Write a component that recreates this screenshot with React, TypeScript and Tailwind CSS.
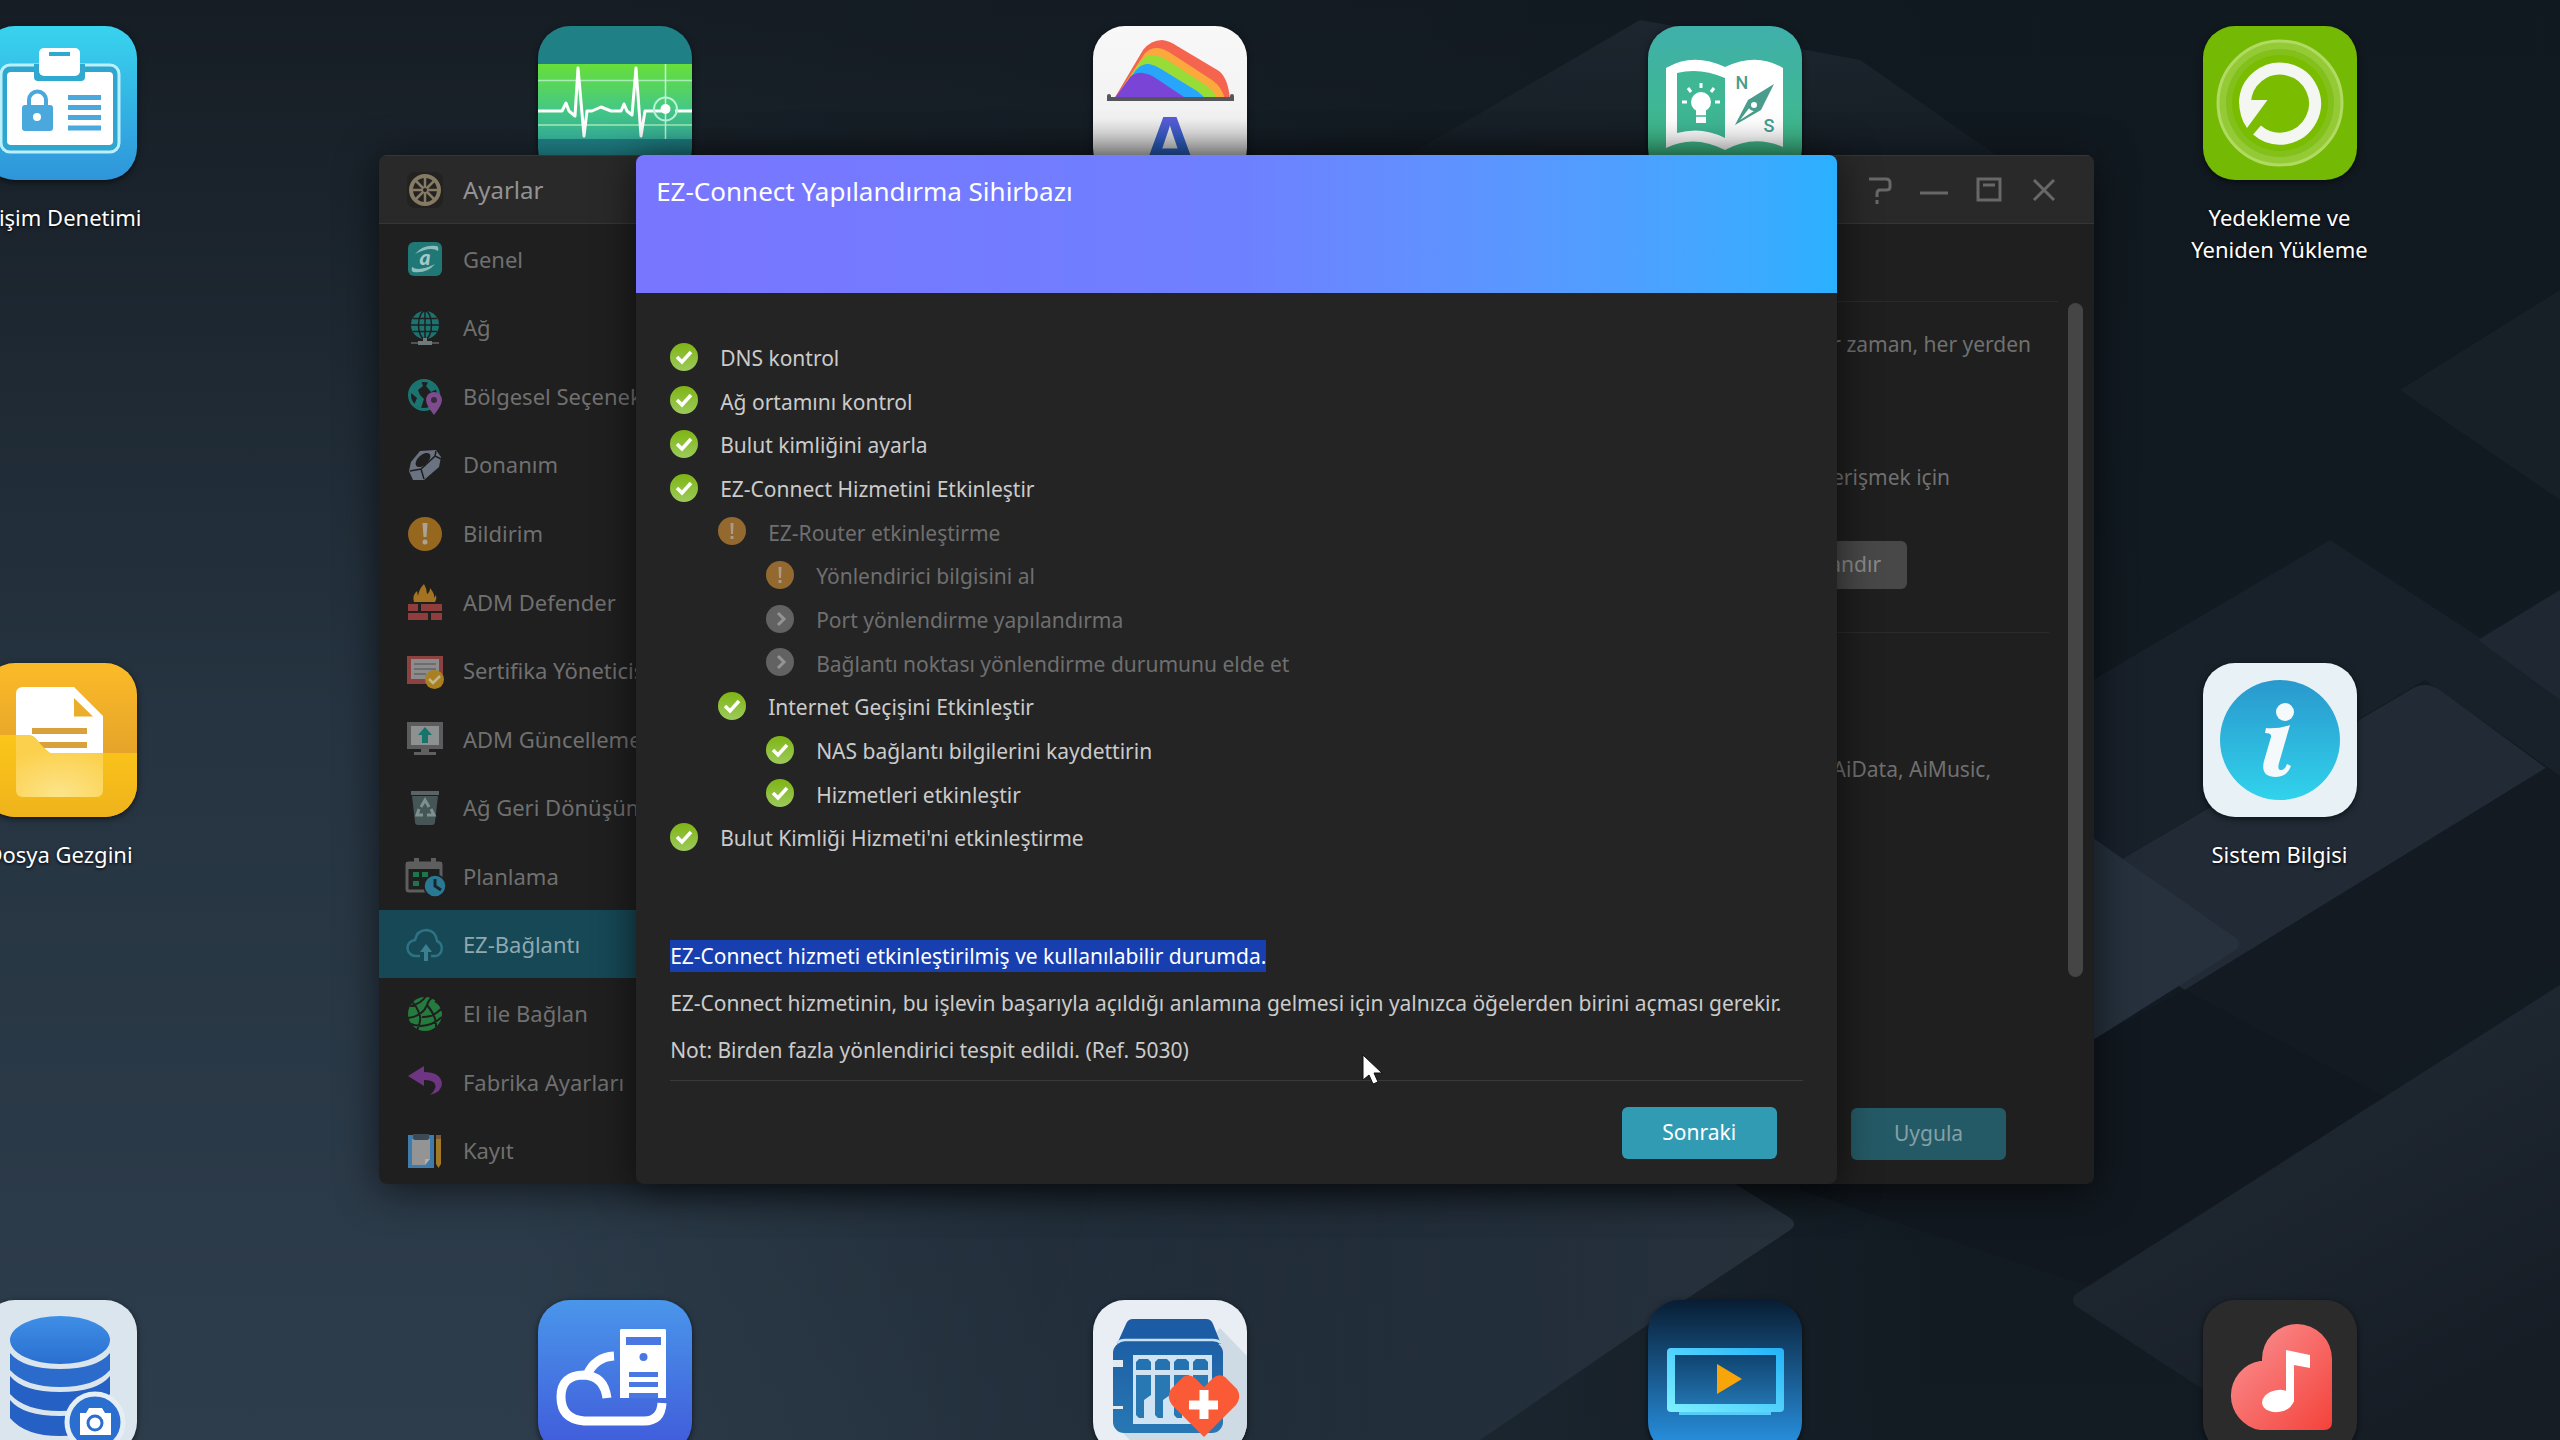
import type { ReactNode } from "react"

type StepState = "done" | "warn" | "skip"

interface Step {
  label: string
  level: 0 | 1 | 2
  state: StepState
}

interface AppShortcut {
  label: string
  place: string
  icon: ReactNode
}

const steps: Step[] = [
  { label: "DNS kontrol", level: 0, state: "done" },
  { label: "Ağ ortamını kontrol", level: 0, state: "done" },
  { label: "Bulut kimliğini ayarla", level: 0, state: "done" },
  { label: "EZ-Connect Hizmetini Etkinleştir", level: 0, state: "done" },
  { label: "EZ-Router etkinleştirme", level: 1, state: "warn" },
  { label: "Yönlendirici bilgisini al", level: 2, state: "warn" },
  { label: "Port yönlendirme yapılandırma", level: 2, state: "skip" },
  { label: "Bağlantı noktası yönlendirme durumunu elde et", level: 2, state: "skip" },
  { label: "Internet Geçişini Etkinleştir", level: 1, state: "done" },
  { label: "NAS bağlantı bilgilerini kaydettirin", level: 2, state: "done" },
  { label: "Hizmetleri etkinleştir", level: 2, state: "done" },
  { label: "Bulut Kimliği Hizmeti'ni etkinleştirme", level: 0, state: "done" },
]

const indent = { 0: "", 1: "pl-12", 2: "pl-24" }

/* ---------- desktop icons, 154 x 154 ---------- */

function AccessIcon() {
  return (
    <svg viewBox="0 0 154 154" className="h-full w-full">
      <defs>
        <linearGradient id="access" x1="0" y1="0" x2="0" y2="1">
          <stop offset="0" stopColor="#38d3ee" />
          <stop offset="1" stopColor="#2f95d9" />
        </linearGradient>
      </defs>
      <rect width="154" height="154" fill="url(#access)" />
      <rect x="18" y="39" width="118" height="87" rx="9" fill="#2fa6cf" stroke="#b9f0fb" strokeWidth="3" />
      <rect x="24" y="46" width="106" height="73" rx="4" fill="#fff" />
      <path d="M51 38h51v13q0 4-4 4H55q-4 0-4-4z" fill="#2fa9cf" />
      <rect x="56" y="22" width="41" height="28" rx="5" fill="#fff" />
      <rect x="66" y="26" width="21" height="4" fill="#2fa9cf" />
      <path d="M46 80v-6a8 8 0 0 1 17 0v6" fill="none" stroke="#4aa8dc" strokeWidth="4" />
      <rect x="39" y="79" width="31" height="26" rx="3" fill="#4aa8dc" />
      <ellipse cx="54" cy="91" rx="4" ry="4" fill="#fff" />
      <path d="M85 71.500h33M85 81.500h33M85 91.500h33M85 102h33" stroke="#4aa8dc" strokeWidth="5" />
    </svg>
  )
}

function ActivityIcon() {
  return (
    <svg viewBox="0 0 154 154" className="h-full w-full">
      <defs>
        <linearGradient id="band" x1="0" y1="0" x2="0" y2="1">
          <stop offset="0" stopColor="#67df3a" />
          <stop offset="0.600" stopColor="#45c884" />
          <stop offset="1" stopColor="#38b39c" />
        </linearGradient>
      </defs>
      <rect width="154" height="154" fill="#1f8086" />
      <rect y="38" width="154" height="75" fill="url(#band)" />
      <path d="M0 54.500h154M0 99h154" stroke="#a4eeb5" strokeWidth="1.500" />
      <path
        d="M0 85h24l4-8 3 8 6 5 3-48 6 68 3-25h5l9-4 10 4h10l3-7 3 7 5 4 4-47 5 68 4-25h16l6-2M137 85h17"
        fill="none"
        stroke="#fff"
        strokeWidth="3"
        strokeLinejoin="round"
      />
      <path d="M127.500 38v75" stroke="#c7f5d5" strokeWidth="1.500" />
      <circle cx="127.500" cy="83" r="11.500" fill="none" stroke="#b9f3d8" strokeWidth="2" />
      <circle cx="127.500" cy="83" r="5" fill="#fff" />
    </svg>
  )
}

function RainbowIcon() {
  return (
    <svg viewBox="0 0 154 154" className="h-full w-full">
      <defs>
        <linearGradient id="letter" x1="0" y1="0" x2="0" y2="1">
          <stop offset="0" stopColor="#7a5aea" />
          <stop offset="0.500" stopColor="#2d5fc0" />
          <stop offset="1" stopColor="#1f5aa8" />
        </linearGradient>
        <linearGradient id="paper" x1="0" y1="0" x2="0" y2="1">
          <stop offset="0" stopColor="#f8f8f8" />
          <stop offset="0.600" stopColor="#f2f2f2" />
          <stop offset="1" stopColor="#b9b9b9" />
        </linearGradient>
      </defs>
      <rect width="154" height="154" fill="url(#paper)" />
      <path d="M21 73L50 24Q58 14 69 14Q77 15 84 20L126 45Q135 52 137 73z" fill="#f4644f" />
      <path d="M22 73L50 30Q56 21 65 22Q72 23 79 28L119 54Q129 61 132 73z" fill="#fba93c" />
      <path d="M22 73L47 36Q53 28 61 29Q67 30 74 34L114 60Q122 66 124 73z" fill="#98dc38" />
      <path d="M22 73L43 44Q49 37 56 38Q62 39 68 43L104 65Q110 70 113 73z" fill="#28a6fb" />
      <path d="M21 73L38 50Q44 46 50 47Q56 48 61 51L94 73z" fill="#7a45d6" />
      <path d="M16 70v3h123v-3" fill="none" stroke="#55555c" strokeWidth="4" strokeLinecap="round" />
      <text x="77" y="145" textAnchor="middle" fontFamily="Liberation Sans, sans-serif" fontWeight="700" fontSize="78" fill="url(#letter)">
        A
      </text>
    </svg>
  )
}

function GuideIcon() {
  return (
    <svg viewBox="0 0 154 154" className="h-full w-full">
      <defs>
        <linearGradient id="guide" x1="0" y1="0" x2="0" y2="1">
          <stop offset="0" stopColor="#3fb0ab" />
          <stop offset="1" stopColor="#3fbd80" />
        </linearGradient>
      </defs>
      <rect width="154" height="154" fill="url(#guide)" />
      <path d="M18 42Q45 26 77 41Q109 26 135 42V121Q106 108 77 124Q46 108 18 122z" fill="#fff" />
      <path d="M29 47Q52 41 77 52V112Q54 100 29 107z" fill="#3fb795" />
      <circle cx="53" cy="76" r="10" fill="#fff" />
      <path d="M48 82h10v15h-10z" fill="#fff" />
      <path d="M53 57v5M40 62l3 4M66 62l-3 4M34 76h5M67 76h5" stroke="#fff" strokeWidth="3" />
      <path d="M48 90h10" stroke="#3fb795" strokeWidth="1.500" />
      <path d="M126 58L113 84L87 99L100 74z" fill="#4a9d8c" />
      <path d="M92 94l10-13 4 4z" fill="#fff" />
      <circle cx="106" cy="79" r="4.500" fill="#fff" stroke="#4a9d8c" strokeWidth="3" />
      <g fontFamily="Roboto, sans-serif" fontSize="18" fontWeight="500" fill="#4a9d8c" textAnchor="middle">
        <text x="94" y="63">N</text>
        <text x="121" y="106">S</text>
      </g>
    </svg>
  )
}

function BackupIcon() {
  return (
    <svg viewBox="0 0 154 154" className="h-full w-full">
      <rect width="154" height="154" fill="#74b903" />
      <circle cx="77" cy="77" r="62" fill="#94ca35" stroke="#b0da62" strokeWidth="3" />
      <circle cx="77" cy="77" r="54" fill="#83c01c" />
      <circle cx="77" cy="77" r="48" fill="#79bc00" />
      <path d="M54 104A35 35 0 1 0 42 78" fill="none" stroke="#f4f6f2" strokeWidth="12" />
      <path d="M36 74h28.500L44 102Q36 91 36 74z" fill="#f4f6f2" />
    </svg>
  )
}

function FilesIcon() {
  return (
    <svg viewBox="0 0 154 154" className="h-full w-full">
      <defs>
        <linearGradient id="folderBack" x1="0" y1="0" x2="0" y2="1">
          <stop offset="0" stopColor="#fbbb28" />
          <stop offset="0.600" stopColor="#e5a32a" />
        </linearGradient>
        <linearGradient id="folderFront" x1="0" y1="0" x2="0" y2="1">
          <stop offset="0" stopColor="#fcc619" />
          <stop offset="1" stopColor="#efb31c" />
        </linearGradient>
        <radialGradient id="glow" cx="0.500" cy="1" r="0.800">
          <stop offset="0" stopColor="#fde58c" />
          <stop offset="1" stopColor="#fbd04c" />
        </radialGradient>
      </defs>
      <rect width="154" height="154" fill="url(#folderBack)" />
      <path d="M33 31q0-7 7-7h51l29 29v45H33z" fill="#fff" />
      <path d="M91 35v18.500h19z" fill="#eaae2b" />
      <path d="M49 68h55M49 82h55" stroke="#d9a13b" strokeWidth="6" />
      <path d="M0 72h45q6 0 10 6t12 12h87v64H0z" fill="url(#folderFront)" />
      <path d="M33 72h12q6 0 10 6t12 12h53v37q0 7-7 7H40q-7 0-7-7z" fill="url(#glow)" />
    </svg>
  )
}

function InfoIcon() {
  return (
    <svg viewBox="0 0 154 154" className="h-full w-full">
      <defs>
        <linearGradient id="info" x1="0" y1="0" x2="0" y2="1">
          <stop offset="0" stopColor="#2998cd" />
          <stop offset="1" stopColor="#31d2ec" />
        </linearGradient>
      </defs>
      <rect width="154" height="154" fill="#e8f1f6" />
      <circle cx="77" cy="77" r="60" fill="url(#info)" />
      <circle cx="82" cy="49" r="9" fill="#f4fafc" />
      <path
        d="M63 65q12 1 24-3l-11 38q-2 7 2 7t6-6l4 2q-4 11-15 11q-16 0-12-16l7-24q1-4-6-4z"
        fill="#f4fafc"
      />
    </svg>
  )
}

function DatabaseIcon() {
  return (
    <svg viewBox="0 0 154 154" className="h-full w-full">
      <defs>
        <linearGradient id="db" x1="0" y1="0" x2="0" y2="1">
          <stop offset="0" stopColor="#3f8fe6" />
          <stop offset="1" stopColor="#2a6fd0" />
        </linearGradient>
      </defs>
      <rect width="154" height="154" fill="#dbe5ed" />
      <ellipse cx="77" cy="40" rx="50" ry="24" fill="url(#db)" />
      <path d="M27 53Q40 69 77 69T127 53V70Q112 87 77 87T27 70z" fill="#2a6bcc" />
      <path d="M27 76Q40 92 77 92T127 76V94Q112 111 77 111T27 94z" fill="#2560c4" />
      <path d="M27 100Q40 116 77 116T127 100V118Q112 136 77 136T27 118z" fill="#2560c4" />
      <circle cx="112" cy="122" r="28" fill="#2a6fd0" stroke="#e6eef5" strokeWidth="5" />
      <path d="M97 113h6l3-5h13l3 5h6v22H97z" fill="#fff" />
      <circle cx="112" cy="123" r="7" fill="#fff" stroke="#2a6fd0" strokeWidth="3" />
    </svg>
  )
}

function CloudServerIcon() {
  return (
    <svg viewBox="0 0 154 154" className="h-full w-full">
      <defs>
        <linearGradient id="cloudServer" x1="0" y1="0" x2="0" y2="1">
          <stop offset="0" stopColor="#4a96ea" />
          <stop offset="1" stopColor="#4059da" />
        </linearGradient>
      </defs>
      <rect width="154" height="154" fill="url(#cloudServer)" />
      <path d="M83 29h44l1 1v68H82V30z" fill="#fff" />
      <path d="M88 37h35v8H88zM91 72h29v5H91zM91 82h29v5H91zM91 93h29v5H91z" fill="#4978e2" />
      <circle cx="105.500" cy="57" r="4" fill="#4978e2" />
      <g fill="none" stroke="#fff" strokeWidth="9">
        <path d="M124 103Q123 121 106 121H46Q23 119 23 97T46 75Q66 76 69 98" />
        <path d="M49 75Q57 57 76 56" />
      </g>
    </svg>
  )
}

function NasHealthIcon() {
  return (
    <svg viewBox="0 0 154 154" className="h-full w-full">
      <defs>
        <linearGradient id="nas" x1="0" y1="0" x2="0" y2="1">
          <stop offset="0" stopColor="#1d5fa5" />
          <stop offset="1" stopColor="#2878b4" />
        </linearGradient>
      </defs>
      <rect width="154" height="154" fill="#e9eef4" />
      <path d="M127 28L154 56V154H50L30 133z" fill="#cfdbe4" />
      <path d="M33 24q2-5 7-5h73q5 0 7 5l8 20H24z" fill="#1c5ca4" />
      <rect x="20" y="42" width="110" height="91" rx="11" fill="url(#nas)" />
      <path d="M24 43q3-3 8-3h88q5 0 8 3" fill="none" stroke="#c8e0f2" strokeWidth="2.500" />
      <path d="M20 60h10v7H20zM20 106h10v3H20z" fill="#dfeaf3" />
      <rect x="40" y="55" width="79" height="69" fill="#cfe3f2" />
      <path
        d="M43 70V62l3-3h9l3 3v8zM62 70V62l3-3h9l3 3v8zM81 70V62l3-3h9l3 3v8zM100 70V62l3-3h9l3 3v8z"
        fill="#2473b0"
      />
      <path
        d="M43 75h15v20l-7 5v18h-5l-3-3zM62 75h15v20l-7 5v18h-5l-3-3zM81 75h15v20l-7 5v18h-5l-3-3zM100 75h15v43h-15z"
        fill="#2878b4"
      />
      <path d="M111 137L79 105Q73 97 78 89L90 77Q96 73 102 78L111 87L120 78Q126 73 132 77L144 89Q149 97 143 105z" fill="#fb5a36" />
      <path d="M111 90v29M96 105h29" stroke="#fff" strokeWidth="9" />
    </svg>
  )
}

function VideoIcon() {
  return (
    <svg viewBox="0 0 154 154" className="h-full w-full">
      <defs>
        <linearGradient id="videoBg" x1="0" y1="0" x2="0" y2="1">
          <stop offset="0" stopColor="#081d33" />
          <stop offset="1" stopColor="#2a97ea" />
        </linearGradient>
        <linearGradient id="tv" x1="0" y1="1" x2="1" y2="0">
          <stop offset="0" stopColor="#7ff0ff" />
          <stop offset="1" stopColor="#23b3f8" />
        </linearGradient>
        <linearGradient id="screen" x1="0" y1="0" x2="0" y2="1">
          <stop offset="0" stopColor="#0f4470" />
          <stop offset="1" stopColor="#2273ae" />
        </linearGradient>
      </defs>
      <rect width="154" height="154" fill="url(#videoBg)" />
      <path d="M31 110h92v5H31z" fill="#56cdf8" />
      <rect x="19" y="48" width="117" height="64" rx="4" fill="url(#tv)" />
      <rect x="27" y="55" width="101" height="49" fill="url(#screen)" />
      <path d="M69 64v30l25-15z" fill="#f7a508" />
    </svg>
  )
}

function MusicIcon() {
  return (
    <svg viewBox="0 0 154 154" className="h-full w-full">
      <defs>
        <linearGradient id="music" x1="0" y1="0" x2="1" y2="1">
          <stop offset="0.200" stopColor="#f98484" />
          <stop offset="1" stopColor="#f4423a" />
        </linearGradient>
      </defs>
      <rect width="154" height="154" fill="#2b2b2b" />
      <path d="M59 61V59A35 35 0 0 1 129 59V122Q129 130 121 130H57A35 35 0 0 1 57 61z" fill="url(#music)" />
      <path d="M83 50l24 5v13l-16-3v37h-8z" fill="#fff" />
      <ellipse cx="75" cy="101" rx="16" ry="11" fill="#fff" transform="rotate(-10 75 101)" />
    </svg>
  )
}

const shortcuts: AppShortcut[] = [
  { label: "Erişim Denetimi", place: "col-start-1 row-start-1", icon: <AccessIcon /> },
  { label: "", place: "col-start-2 row-start-1", icon: <ActivityIcon /> },
  { label: "", place: "col-start-3 row-start-1", icon: <RainbowIcon /> },
  { label: "", place: "col-start-4 row-start-1", icon: <GuideIcon /> },
  { label: "Yedekleme ve Yeniden Yükleme", place: "col-start-5 row-start-1", icon: <BackupIcon /> },
  { label: "Dosya Gezgini", place: "col-start-1 row-start-2", icon: <FilesIcon /> },
  { label: "Sistem Bilgisi", place: "col-start-5 row-start-2", icon: <InfoIcon /> },
  { label: "", place: "col-start-1 row-start-3", icon: <DatabaseIcon /> },
  { label: "", place: "col-start-2 row-start-3", icon: <CloudServerIcon /> },
  { label: "", place: "col-start-3 row-start-3", icon: <NasHealthIcon /> },
  { label: "", place: "col-start-4 row-start-3", icon: <VideoIcon /> },
  { label: "", place: "col-start-5 row-start-3", icon: <MusicIcon /> },
]

/* ---------- sidebar icons, 36 x 36 ---------- */

const sections: { label: string; icon: ReactNode }[] = [
  {
    label: "Genel",
    icon: (
      <>
        <rect x="1" y="1" width="34" height="34" rx="6" fill="#1f7776" />
        <path d="M8 13Q16 3 30 5Q32 6 31 10Q24 5 8 13zM28 23Q20 33 6 31Q4 30 5 26Q12 31 28 23z" fill="#8fbcbb" />
        <text x="18" y="24" textAnchor="middle" fontFamily="Lato, sans-serif" fontWeight="900" fontStyle="italic" fontSize="21" fill="#a5c8c8">
          a
        </text>
      </>
    ),
  },
  {
    label: "Ağ",
    icon: (
      <>
        <circle cx="18" cy="15" r="14" fill="#1c7471" />
        <g fill="none" stroke="#1f1f1f" strokeWidth="1.500">
          <ellipse cx="18" cy="15" rx="6.500" ry="14" />
          <path d="M18 1v28M4 15h28M6 8.500h24M6 21.500h24" />
        </g>
        <path d="M4 33h28" stroke="#666" strokeWidth="1.500" />
        <path d="M16 28h4v3h5v4H11v-4h5z" fill="#707a7a" />
      </>
    ),
  },
  {
    label: "Bölgesel Seçenekler",
    icon: (
      <>
        <circle cx="17" cy="17" r="14.500" fill="none" stroke="#1c7471" strokeWidth="3" />
        <path d="M4 10L14 3l2 5-5 4 2 5 4 4-3 9L7 27l3-7-6-5zM22 3l8 8-6 3-5-6z" fill="#1c7471" />
        <path d="M27 14a8 8 0 0 1 8 8q0 5-8 15-8-10-8-15a8 8 0 0 1 8-8z" fill="#7d4c8c" />
        <circle cx="27" cy="22" r="3" fill="#3a2a40" />
      </>
    ),
  },
  {
    label: "Donanım",
    icon: (
      <>
        <path d="M13 4L29 3L34 10L32 20L17 33L6 33L2 24L4 15z" fill="#6b7380" />
        <ellipse cx="16" cy="13" rx="9" ry="5" transform="rotate(-42 16 13)" fill="#1f1f1f" />
        <path d="M3 24l11-2L28 9l1-5M14 22l3 10M28 9l6 3" fill="none" stroke="#1f1f1f" strokeWidth="1.500" />
      </>
    ),
  },
  {
    label: "Bildirim",
    icon: (
      <>
        <circle cx="18" cy="18" r="17" fill="#96681f" />
        <path d="M15.500 7h5l-1 14h-3z" fill="#a9a39a" />
        <circle cx="18" cy="26" r="2.500" fill="#a9a39a" />
      </>
    ),
  },
  {
    label: "ADM Defender",
    icon: (
      <>
        <path d="M7 18Q5 11 10 7l1 5Q12 5 17 0q3 5 3 10 3-2 3-6 5 6 4 10l2-3q1 4-1 7z" fill="#a37321" />
        <path d="M1 20h10v7H1zM14 20h21v7H14zM1 29h20v7H1zM24 29h11v7H24z" fill="#8f3d3d" />
      </>
    ),
  },
  {
    label: "Sertifika Yöneticisi",
    icon: (
      <>
        <rect x="0" y="3" width="36" height="28" fill="#8d4242" />
        <rect x="4" y="6" width="28" height="20" fill="#8c8c8c" />
        <path d="M7 11h22M7 16h22M7 21h12" stroke="#6d6d6d" strokeWidth="2" />
        <circle cx="27.500" cy="26.500" r="9.500" fill="#a8801f" />
        <path d="M22 26l4 4 7-7" fill="none" stroke="#c5b48d" strokeWidth="2.500" />
      </>
    ),
  },
  {
    label: "ADM Güncelleme",
    icon: (
      <>
        <rect x="0" y="1" width="36" height="27" fill="#5c5c5c" />
        <rect x="4" y="5" width="28" height="19" fill="#8e9191" />
        <path d="M18 6l7 8h-4v8h-6v-8h-4z" fill="#17746a" />
        <path d="M14 28h8v3h7v3H7v-3h7z" fill="#606060" />
      </>
    ),
  },
  {
    label: "Ağ Geri Dönüşüm Kutusu",
    icon: (
      <>
        <path d="M4 1h28v4H4z" fill="#5a6466" />
        <path d="M5 6h26l-3 26q0 3-3 3H11q-3 0-3-3z" fill="#465555" />
        <path d="M14 17l4-7 4 7M12 19l-2 6h6M24 19l3 6h-7" fill="none" stroke="#7d9190" strokeWidth="3" />
      </>
    ),
  },
  {
    label: "Planlama",
    icon: (
      <>
        <rect x="0" y="5" width="34" height="28" rx="2" fill="none" stroke="#5e5e5e" strokeWidth="3" />
        <path d="M-1 4h36v7H-1zM7 0h5v6H7zM24 0h5v6h-5z" fill="#5e5e5e" />
        <path d="M6 14h6v5H6zM15 14h6v5h-6zM6 23h6v5H6z" fill="#20744b" />
        <circle cx="28" cy="28" r="11" fill="#2a7894" stroke="#1f1f1f" strokeWidth="1.500" />
        <path d="M28 21v7l6 4" fill="none" stroke="#16262d" strokeWidth="3" />
      </>
    ),
  },
  {
    label: "EZ-Bağlantı",
    icon: (
      <>
        <path d="M13 29H9A8 8 0 0 1 8 13Q10 3 20 3Q29 4 30 14A8 8 0 0 1 29 29H24" fill="none" stroke="#2d7383" strokeWidth="2.500" />
        <path d="M19 17l6 8h-4v9h-4v-9h-4z" fill="#3c7f8e" />
      </>
    ),
  },
  {
    label: "El ile Bağlan",
    icon: (
      <>
        <circle cx="18" cy="18" r="17" fill="#257a3e" />
        <path
          d="M3 10Q14 8 19 0M1 22Q16 20 20 9T30 4M10 34Q14 26 13 20Q10 10 5 6M15 21Q25 22 34 13M20 9q10 12 9 22M1 27q18 8 34-6M28 5q6 3 8 11"
          fill="none"
          stroke="#1f1f1f"
          strokeWidth="2"
        />
      </>
    ),
  },
  {
    label: "Fabrika Ayarları",
    icon: (
      <path d="M1 12L17 2V8Q33 8 35 19Q35 28 23 31Q30 25 28 20Q26 16 17 16V22z" fill="#6e3583" />
    ),
  },
  {
    label: "Kayıt",
    icon: (
      <>
        <rect x="1" y="2" width="26" height="33" fill="#3f7cab" />
        <path d="M5 6h18v20l-5 6H5z" fill="#949494" />
        <path d="M6 1h16v4q0 2-2 2H8q-2 0-2-2z" fill="#3c4a55" />
        <path d="M18 32v-6h5z" fill="#b0b0b0" />
        <path d="M29 4h5v27l-2.500 4-2.500-4z" fill="#a27a25" />
        <path d="M29 2h5v4h-5z" fill="#775c3b" />
      </>
    ),
  },
]

function Wallpaper() {
  return (
    <svg
      viewBox="0 0 2560 1440"
      preserveAspectRatio="xMidYMid slice"
      aria-hidden="true"
      className="absolute inset-0 h-full w-full"
    >
      <defs>
        <linearGradient id="sky" x1="0" y1="0" x2="0" y2="1">
          <stop offset="0" stopColor="#161d24" />
          <stop offset="0.500" stopColor="#263441" />
          <stop offset="1" stopColor="#2e3d4c" />
        </linearGradient>
        <linearGradient id="shade" x1="0" y1="0" x2="1" y2="0">
          <stop offset="0.200" stopColor="#111920" stopOpacity="0" />
          <stop offset="0.750" stopColor="#111920" stopOpacity="0.950" />
        </linearGradient>
        <linearGradient id="slab" x1="0" y1="0" x2="1" y2="0">
          <stop offset="0" stopColor="#263240" stopOpacity="0" />
          <stop offset="0.600" stopColor="#263240" stopOpacity="0.700" />
          <stop offset="1" stopColor="#26313c" />
        </linearGradient>
        <linearGradient id="slabFade" x1="0" y1="0" x2="0.600" y2="1">
          <stop offset="0" stopColor="#242d39" />
          <stop offset="1" stopColor="#161d25" />
        </linearGradient>
        <linearGradient id="ridge" x1="0" y1="0" x2="0" y2="1">
          <stop offset="0" stopColor="#1d252e" />
          <stop offset="1" stopColor="#1b232b" stopOpacity="0.200" />
        </linearGradient>
      </defs>
      <rect width="2560" height="1440" fill="url(#sky)" />
      <rect width="2560" height="1440" fill="url(#shade)" />
      <path d="M1400 160L1640 20L1860 60L2060 200z" fill="url(#ridge)" />
      <path d="M2093 680L2330 540L2560 690V776L2425 680L2093 876z" fill="#18202a" />
      <path d="M2400 390L2560 290V500z" fill="#171f27" />
      <path d="M2093 876L2410 690Q2425 680 2440 690L2546 768L2185 990L2093 930z" fill="#212a35" />
      <path d="M2478 640L2560 590V700z" fill="#1f2732" />
      <path d="M2093 838L2236 938Q2242 944 2236 950L2093 1040z" fill="#26313d" />
      <path d="M2185 990L2546 768L2560 776V960L2340 1110z" fill="#131a22" />
      <path d="M2093 1040L2185 990L2390 1100L2100 1290L1800 1190V1184H2093z" fill="#11181f" />
      <path d="M1100 1184H1735L1790 1218Q1798 1224 1790 1230L1640 1330L1480 1440H1000z" fill="url(#slab)" />
      <path d="M2560 985L2076 1294Q2070 1300 2076 1306L2280 1440H2560z" fill="url(#slabFade)" />
    </svg>
  )
}

function StepIcon({ state }: { state: StepState }) {
  return (
    <svg viewBox="0 0 28 28" className="mb-1 size-7 shrink-0">
      {state === "done" && (
        <>
          <defs>
            <linearGradient id="done" x1="0" y1="0" x2="0" y2="1">
              <stop offset="0" stopColor="#7fb414" />
              <stop offset="1" stopColor="#9ccb5c" />
            </linearGradient>
          </defs>
          <circle cx="14" cy="14" r="14" fill="url(#done)" />
          <path d="M7 14l5 5 9-10" fill="none" stroke="#fff" strokeWidth="3.500" />
        </>
      )}
      {state === "warn" && (
        <>
          <circle cx="14" cy="14" r="14" fill="#94692f" />
          <path d="M12.500 6h3l-.5 11h-2zM12.500 19h3v3h-3z" fill="#a99c8b" />
        </>
      )}
      {state === "skip" && (
        <>
          <circle cx="14" cy="14" r="14" fill="#626262" />
          <path d="M12 8l6 6-6 6" fill="none" stroke="#949494" strokeWidth="3" />
        </>
      )}
    </svg>
  )
}

function SettingsWindow() {
  return (
    <section aria-label="Ayarlar" className="flex h-full flex-col overflow-hidden rounded-lg bg-[#1f1f1f] text-[22px] text-[#707070]">
      <header className="flex h-[69px] shrink-0 items-center justify-between border-y border-[#363636] bg-[#292929] pr-9 pl-7">
        <div className="flex items-center gap-5">
          <svg viewBox="0 0 36 36" className="size-9">
            <rect width="36" height="36" rx="8" fill="#232221" />
            <circle cx="18" cy="18" r="14" fill="none" stroke="#857a63" strokeWidth="4" />
            <circle cx="18" cy="18" r="3" fill="#857a63" />
            <path d="M18 5v26M5 18h26M9 9l18 18M27 9L9 27" stroke="#857a63" strokeWidth="2.500" />
            <circle cx="18" cy="18" r="2" fill="#232221" />
          </svg>
          <h1 className="text-2xl text-[#929292]">Ayarlar</h1>
        </div>
        <div className="flex items-center gap-[27px]">
          <button aria-label="Yardım" className="size-7">
            <svg viewBox="0 0 28 28" fill="none" stroke="#686868" strokeWidth="3">
              <path d="M4 3h17q4 0 4 4v4q0 3-4 3h-6q-3 0-3 4v3M12 24v4" />
            </svg>
          </button>
          <button aria-label="Küçült" className="size-7">
            <svg viewBox="0 0 28 28" stroke="#686868" strokeWidth="3">
              <path d="M0 17h28" />
            </svg>
          </button>
          <button aria-label="Büyüt" className="size-7">
            <svg viewBox="0 0 28 28" fill="none" stroke="#686868" strokeWidth="3">
              <path d="M3 3h22v21H3zM8 9h12" />
            </svg>
          </button>
          <button aria-label="Kapat" className="size-7">
            <svg viewBox="0 0 28 28" fill="none" stroke="#686868" strokeWidth="3">
              <path d="M4 4l20 20M24 4L4 24" />
            </svg>
          </button>
        </div>
      </header>
      <div className="flex flex-1">
        <nav className="grid w-[257px] shrink-0 auto-rows-fr overflow-hidden">
          {sections.map((section) => {
            const active = section.label === "EZ-Bağlantı"
            return (
              <a
                key={section.label}
                href="#"
                className={`flex items-center gap-5 pt-0.5 pl-7 whitespace-nowrap ${active ? "bg-[#164856] text-[#8fa8af]" : ""}`}
              >
                <svg viewBox="0 0 36 36" className="size-9 shrink-0 overflow-visible">
                  {section.icon}
                </svg>
                {section.label}
              </a>
            )
          })}
        </nav>
        <div className="flex flex-1 flex-col pr-[11px] text-[21px]">
          <div className="flex flex-1 pt-[77px]">
            <div className="mr-[10px] flex flex-1 flex-col items-end border-t border-[#2b2b2b] pr-[27px]">
              <p className="mt-[26px] h-8 leading-8">her zaman, her yerden</p>
              <p className="mt-[101px] mr-[81px] h-8 leading-8">erişmek için</p>
              <button className="mt-12 mr-[124px] h-12 rounded-md bg-[#484848] px-[26px] text-[#8a8a8a]">Yapılandır</button>
              <hr className="-mr-[18px] mt-[43px] w-full border-[#2b2b2b]" />
              <p className="mt-[120px] mr-[40px] h-8 leading-8">AiData, AiMusic,</p>
            </div>
            <div className="mt-0.5 h-[674px] w-[15px] rounded-full bg-[#454545]" />
          </div>
          <div className="mr-[77px] mb-6 flex justify-end">
            <button className="h-[52px] w-[155px] rounded-md bg-[#245a66] text-[#84a0a6]">Uygula</button>
          </div>
        </div>
      </div>
    </section>
  )
}

function WizardDialog() {
  return (
    <div
      role="dialog"
      aria-labelledby="wizard-title"
      className="absolute inset-y-0 left-[15%] flex w-[70%] flex-col overflow-hidden rounded-lg bg-[#242424] text-[21px] text-[#cbcbcb] shadow-[0_4px_40px_rgba(0,0,0,0.6)]"
    >
      <header className="h-[138px] shrink-0 bg-linear-to-r from-[#7975ff] via-[#6e80ff] via-50% to-[#2ab0ff] px-5 pt-5">
        <h2 id="wizard-title" className="text-[26px] leading-8 text-white">
          EZ-Connect Yapılandırma Sihirbazı
        </h2>
      </header>
      <div className="flex flex-1 flex-col px-[34px] pt-11">
        <ul className="grid h-[524px] auto-rows-fr">
          {steps.map((step) => (
            <li
              key={step.label}
              className={`flex items-center gap-[22px] ${indent[step.level]} ${step.state === "done" ? "" : "text-[#6f6f6f]"}`}
            >
              <StepIcon state={step.state} />
              {step.label}
            </li>
          ))}
        </ul>
        <div className="mt-[72px] leading-[47px] whitespace-nowrap">
          <p>
            <mark className="inline-block bg-[#183fb0] leading-8 text-white">
              EZ-Connect hizmeti etkinleştirilmiş ve kullanılabilir durumda.
            </mark>
          </p>
          <p>EZ-Connect hizmetinin, bu işlevin başarıyla açıldığı anlamına gelmesi için yalnızca öğelerden birini açması gerekir.</p>
          <p>Not: Birden fazla yönlendirici tespit edildi. (Ref. 5030)</p>
        </div>
        <div className="mt-1.5 flex justify-end border-t border-[#3a3a3a] pt-[26px] pr-[26px]">
          <button className="h-[52px] w-[155px] rounded-md bg-[#319bb4] text-white">Sonraki</button>
        </div>
      </div>
    </div>
  )
}

export default function App() {
  return (
    <main className="relative h-screen overflow-hidden bg-[#161d24] font-['Noto_Sans','Open_Sans',sans-serif]">
      <Wallpaper />
      <div className="relative -ml-[218px] grid auto-rows-[637px] grid-cols-[repeat(5,555px)] pt-[26px]">
        {shortcuts.map((shortcut) => (
          <a key={shortcut.place} href="#" className={`flex flex-col items-center ${shortcut.place}`}>
            <span className="size-[154px] shrink-0 overflow-hidden rounded-[32px] shadow-[0_2px_6px_rgba(0,0,0,0.6)]">
              {shortcut.icon}
            </span>
            {shortcut.label && (
              <span className="mt-[21px] w-[190px] text-center text-[22px] leading-8 text-white [text-shadow:0_1px_3px_#000]">
                {shortcut.label}
              </span>
            )}
          </a>
        ))}
      </div>
      <div className="absolute top-[155px] left-[14.8%] h-[1029px] w-[67%] rounded-lg shadow-[0_6px_40px_rgba(0,0,0,0.6)]">
        <SettingsWindow />
        <WizardDialog />
      </div>
      {/* pointer */}
      <svg viewBox="0 0 20 30" className="absolute top-[1055px] left-[1363px] h-[30px] w-5 overflow-visible">
        <path d="M0 0v25l6-5 4 9 5-2-4-9h8z" fill="#fff" stroke="#111" strokeWidth="1" />
      </svg>
    </main>
  )
}
